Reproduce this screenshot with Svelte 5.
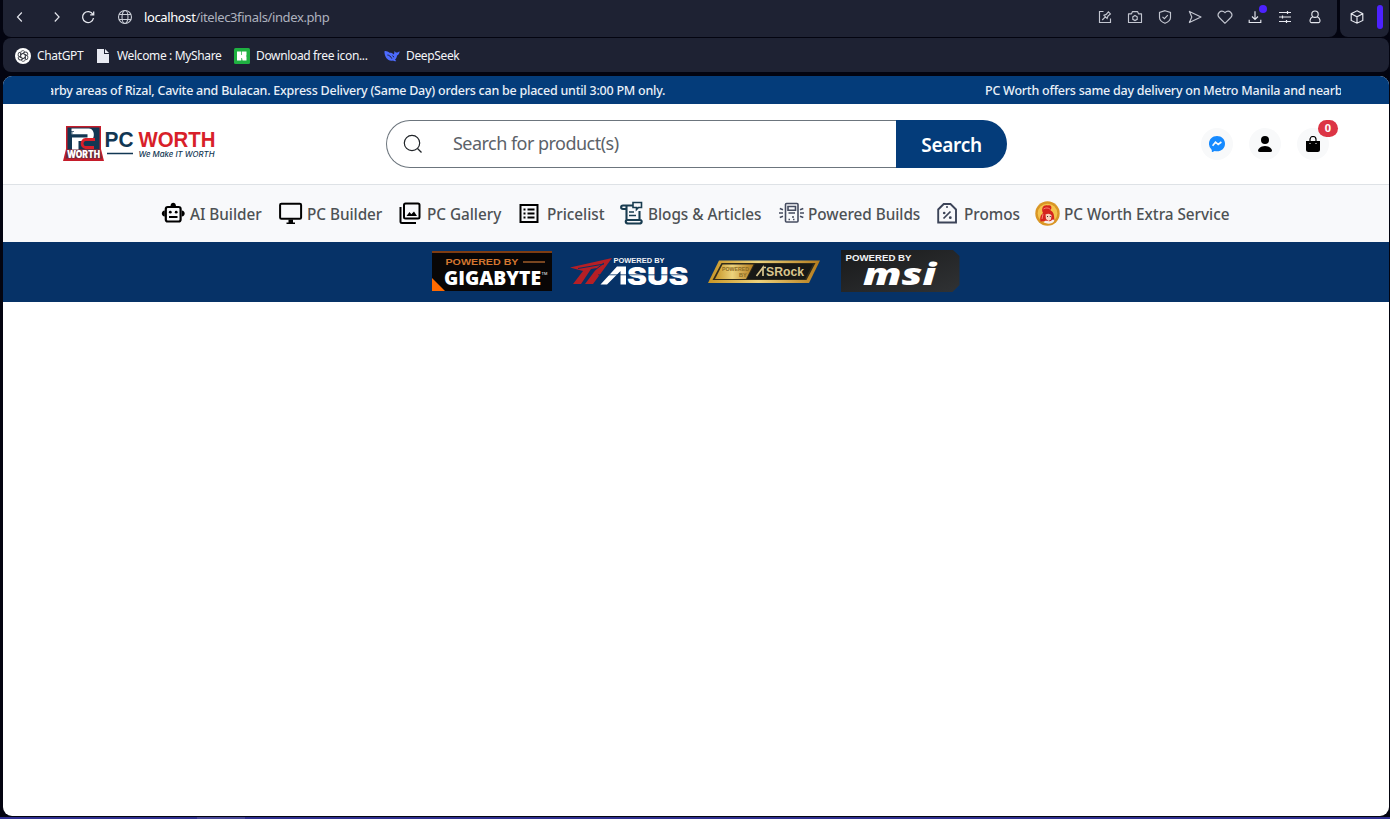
<script>
  const nav = [
    { id: 'ai', label: 'AI Builder', w: 72 },
    { id: 'pc', label: 'PC Builder', w: 75 },
    { id: 'gallery', label: 'PC Gallery', w: 75 },
    { id: 'price', label: 'Pricelist', w: 56 },
    { id: 'blog', label: 'Blogs & Articles', w: 115 },
    { id: 'power', label: 'Powered Builds', w: 111 },
    { id: 'promo', label: 'Promos', w: 55 },
    { id: 'extra', label: 'PC Worth Extra Service', w: 168 }
  ];
</script>

<div class="browser">
  <div class="toolbar">
    <div class="address">
      <svg class="i back" viewBox="0 0 16 16"><path d="M9.8 3.5 5.5 8l4.3 4.5" /></svg>
      <svg class="i fwd" viewBox="0 0 16 16"><path d="M5.8 3.5 10.1 8l-4.3 4.5" /></svg>
      <svg class="i reload" viewBox="0 0 16 16"><path d="M12.9 5.400A5.500 5.500 0 1 0 13.500 9M13.700 2.500v3.400h-3.500" stroke-width="1.300" /></svg>
      <svg class="i globe" viewBox="0 0 16 16"><circle cx="8" cy="8" r="6.500" /><ellipse cx="8" cy="8" rx="3" ry="6.500" /><path d="M2 5.500h12M2 10.500h12" /></svg>
      <p class="url"><b>localhost</b>/itelec3finals/index.php</p>
      <div class="tools">
        <svg class="i dim" viewBox="0 0 16 16"><path d="M6.500 2.500h-4v11h11V9.500M5.200 11l3.200-3.200M7 6.300l3.100 3.100.8-2.200 2.500-2.300-2-2-2.200 2.500z" /></svg>
        <svg class="i dim" viewBox="0 0 16 16"><path d="M1.500 4.800h3l1-2.200h5l1 2.200h3v8.700h-13z" stroke-linejoin="round" /><path d="M8 6.500l2.200 1.300v2.500L8 11.600l-2.200-1.300V7.800z" /></svg>
        <svg class="i dim" viewBox="0 0 16 16"><path d="M8 1.700 13.500 3.500v5c0 2.500-2.400 4.600-5.500 5.800-3.100-1.200-5.500-3.300-5.500-5.800v-5zM5.500 7.800l1.900 1.800 3.400-3.500" /></svg>
        <svg class="i dim" viewBox="0 0 16 16"><path d="M2.400 2.400 14 8 2.400 13.600 4.800 8z" stroke-linejoin="round" /></svg>
        <svg class="i dim" viewBox="0 0 16 16"><path d="M8 14.300 2.200 8.500C-1 5 4-.5 8 3.700c4-4.200 9 1.300 5.800 4.800z" /></svg>
        <span class="dl"><svg class="i" viewBox="0 0 16 16"><path d="M8 2.200v8.200M5 7.500l3 3 3-3M2.200 10.800v2.700h11.600v-2.700" /></svg><em></em></span>
        <svg class="i" viewBox="0 0 16 16"><path d="M2 3.500h12M2 8h12M2 12.500h12M10.500 2v3M5.500 6.500v3M9.500 11v3" stroke-width="1.200" /></svg>
        <svg class="i" viewBox="0 0 16 16"><circle cx="8" cy="5.200" r="3.200" /><path d="M5.600 8C2.400 9 2.500 13.600 4.200 13.600h7.600c1.700 0 1.800-4.600-1.400-5.600" /></svg>
      </div>
    </div>
    <div class="side">
      <svg class="i" viewBox="0 0 16 16"><path d="M8 1.800 13.800 4.700v6.700L8 14.200l-5.800-2.800V4.700zM2.200 4.700 8 7.800l5.800-3.100M8 7.800v6.400" /></svg>
      <span></span>
    </div>
  </div>

  <div class="bookmarks">
    <div class="bm b1">
      <svg viewBox="0 0 16 16"><circle cx="8" cy="8" r="8" fill="#fff" /><g fill="none" stroke="#3b3e46" stroke-width=".9">{#each [0, 60, 120, 180, 240, 300] as a}<path transform="rotate({a} 8 8)" d="M5.700 9.300V4.800c0-2.400 3.200-2.800 4.200-.9M5.700 6.700 9.400 4.500" />{/each}</g></svg>
      <span>ChatGPT</span>
    </div>
    <div class="bm b2">
      <svg viewBox="0 0 16 16"><path fill="#e8eaf2" d="M2 1h7v5h5v9H2z" /><path fill="#e8eaf2" d="M10 1l4 4h-4z" /></svg>
      <span>Welcome : MyShare</span>
    </div>
    <div class="bm b3">
      <svg viewBox="0 0 16 16"><rect width="16" height="16" rx="1.500" fill="#1fb141" /><path fill="#fff" d="M3 3.500h4.300v9H3zM8 3.500h4.500v4l-.7.5.7.500v4H8.500L8 10z" /><path fill="#fff" d="M7 7h2v3H7z" /></svg>
      <span>Download free icon...</span>
    </div>
    <div class="bm b4">
      <svg viewBox="0 0 16 16"><g transform="translate(0 -.8)"><path fill="#4d6bfe" d="M.4 4.200c1.300-.8 3.500.2 5.100 1.300 1.800-.2 3.100.4 4.300 1.800.7-.9.300-2.200.8-3.500.6.8.9 1.400 1.800 1.600 1.200-.1 2-.5 3.200-1.400-.1 2.200-1.100 3.800-2.600 4.400-.1 1.800-.8 3.100-2 4.100l1.300 1.200c-1.300.5-2.400.1-3.300-.4C3.800 14.600.5 9.400.4 4.200z" /><path d="M3.400 7.800c1.800.1 3.300 1.400 4.400 3.600M8.400 8.500l1.700 1.500" stroke="#1e2233" stroke-width="1" fill="none" /></g></svg>
      <span>DeepSeek</span>
    </div>
  </div>

  <main>
    <div class="ticker">
      <div class="window">
        <span class="t1">arby areas of Rizal, Cavite and Bulacan. Express Delivery (Same Day) orders can be placed until 3:00 PM only.</span>
        <span class="t2">PC Worth offers same day delivery on Metro Manila and nearby</span>
      </div>
    </div>

    <header>
      <svg class="logo" viewBox="0 0 154 38">
        <path d="M3 2h35v23l3 12H0l3-12z" fill="#c51c2a" />
        <path d="M4.500 3.500H36.500v22H4.500z" fill="#123753" />
        <path d="M4 25.500h33l2 9H2.500z" fill="#6b2a3a" />
        <path d="M8.500 4.500H26c6.500 0 6.500 12.500 0 12.500H15.500v8.500H9V13.500h15.500v-3.200H8.500z" fill="#fff" />
        <path d="M32 15.500h-9.500c-4.500 0-4.500 8 0 8H31" fill="none" stroke="#d81f2a" stroke-width="2.800" />
        <path d="M8 7.500h3M8 9h2" stroke="#123753" stroke-width=".7" />
        <text x="4" y="33.500" textLength="33" lengthAdjust="spacingAndGlyphs" class="badge-word">WORTH</text>
        <text x="41.500" y="22.700" textLength="29" lengthAdjust="spacingAndGlyphs" class="word" fill="#123753">PC</text>
        <text x="75.500" y="22.700" textLength="77" lengthAdjust="spacingAndGlyphs" class="word" fill="#d81f2a">WORTH</text>
        <path d="M44 29.500h26" stroke="#123753" stroke-width="1.500" />
        <text x="75.500" y="32.500" textLength="76" lengthAdjust="spacingAndGlyphs" class="tag">We Make IT WORTH</text>
      </svg>
      <div class="search">
        <div class="field">
          <svg viewBox="0 0 20 20"><circle cx="9" cy="9" r="7.700" /><path d="m14.500 14.500 4 4" /></svg>
          <span>Search for product(s)</span>
        </div>
        <button>Search</button>
      </div>
      <div class="actions">
        <div class="round"><svg viewBox="0 0 16 16"><path fill="#168aff" d="M8 0c4.600 0 8 3.300 8 7.700s-3.400 7.600-8 7.600c-.8 0-1.600-.1-2.300-.3L3.500 16c-.4.100-.7-.1-.7-.5v-1.600A7.500 7.500 0 0 1 0 7.700C0 3.300 3.400 0 8 0z" /><path d="m3.600 9.700 2.900-3.500 2.700 2.200 3.200-2.400" fill="none" stroke="#f7f9fb" stroke-width="1.600" /></svg></div>
        <div class="round"><svg viewBox="0 0 16 16"><circle cx="8" cy="4" r="4" /><path d="M2.500 16C1.500 16 1 15.500 1 14.800 1 13 3.500 10 8 10s7 3 7 4.800c0 .7-.5 1.200-1.500 1.200z" /></svg></div>
        <div class="round"><svg viewBox="0 0 16 16"><path d="M5 6V3.500a3 3 0 0 1 6 0V6" fill="none" stroke="#000" stroke-width="1.200" /><path d="M1 5h14v8.500A2.500 2.500 0 0 1 12.500 16h-9A2.500 2.500 0 0 1 1 13.500z" /><path d="M4.500 7.500h1M10.500 7.500h1" stroke="#fff" /></svg><i>0</i></div>
      </div>
    </header>

    <nav>
      {#each nav as n}
        <a href="#{n.id}">
          <svg viewBox="0 0 25 25">
            {#if n.id === 'ai'}
              <g fill="none" stroke="#000" stroke-width="2.200"><rect x="4.800" y="6" width="14.800" height="14.500" rx="2" /></g><path d="M9.500 5c0-4.500 5.500-4.500 5.500 0zM3.800 9.500v6C-.2 15.500-.2 9.500 3.800 9.500zM20.700 9.500v6c4 0 4-6 0-6z" /><circle cx="9.300" cy="11.200" r="1.400" /><circle cx="15.200" cy="11.200" r="1.400" /><path d="M8 15h8.500v2H8z" />
            {:else if n.id === 'pc'}
              <rect x="2.100" y="2.800" width="21" height="15" rx="1.300" fill="none" stroke="#000" stroke-width="2" /><path d="M10.500 18.500h4.500v3h2V23H8.500v-1.500h2z" />
            {:else if n.id === 'gallery'}
              <g fill="none" stroke="#000" stroke-width="2"><rect x="6" y="2.500" width="15.500" height="15" rx="1.500" /><path d="M2.500 6v14.500q0 1.500 1.500 1.500H18" /></g><path d="M8.500 15 11.500 11l1.800 2.200L16 10.500l3 4.500z" />
            {:else if n.id === 'price'}
              <path d="M2.500 4h17v17h-17z" fill="none" stroke="#000" stroke-width="2" /><path d="M5.500 8.500h2M9.500 8.500h7M5.500 12.500h2M9.500 12.500h7M5.500 16.500h2M9.500 16.500h7" stroke="#000" stroke-width="2" />
            {:else if n.id === 'blog'}
              <g fill="none" stroke="#183c50" stroke-width="2.100"><path d="M14 4.500H4C1.500 4.500 1.500 8 4 8h3.500v11M7.500 8V4.500M20.500 10v9M9.500 22.500h10.800c3 0 3-3.500 1-3.500H8.500c-2.500 0-2.500 3.500 1 3.500" /><path d="M14 1.500h8.500v5h-3l-2 2v-2H14zM10 11h5M10 14.500h7" stroke-width="1.600" /></g>
            {:else if n.id === 'power'}
              <g fill="none" stroke="#454c60" stroke-width="1.600"><rect x="6.500" y="2.500" width="12.500" height="18.500" rx="1" /><path d="M9 5.500h7.500v3.800H9zM.8 7.500l3.200 1.200M0 12h4M.8 16.500 4 15.300M24.300 7.500l-3.300 1.200M25 12h-4M24.300 16.500 21 15.300" /><path d="M9.500 12h6.500M9.500 18.500h1.500M14 18.500h1.500M13 16h2" stroke-width="1.700" /></g>
            {:else if n.id === 'promo'}
              <path d="M3.200 21.500V8.500L8.700 3h6.800L21 8.500v13z" fill="none" stroke="#3c4458" stroke-width="1.900" /><path d="m8.500 17.500 7-7M11 6h2" stroke="#3c4458" stroke-width="1.700" /><circle cx="9.200" cy="12" r="1.300" fill="#3c4458" /><circle cx="15.300" cy="16.700" r="1.400" fill="#3c4458" />
            {:else}
              <circle cx="12.500" cy="12.500" r="12.200" fill="#d99625" /><circle cx="12.500" cy="12.500" r="9.800" fill="#f4c34c" /><path d="M5.500 20.500c-1-4 .5-7 2.500-8.500C5.500 7 9 3 13 4.500c4-1 4 3 2.500 5C19.500 11 19 16 19.500 20z" fill="#d5251e" /><path d="M10.500 13.500c3-1.500 5-.5 6 1l-.5 4-2.500 1.500-2.500-2z" fill="#f8d3bd" /><path d="M9 21.500c1-3 4-1 5.500-1 2 0 3-3.500 5-1-1.500 3.500-7 4-10.500 2z" fill="#f6eff2" /><path d="M8.500 8c2-1.500 5-1.500 7 .5M8 13l-1 5" stroke="#fa8072" stroke-width="1" fill="none" /><path d="M12 15.500h1M14.800 15.500h1" stroke="#493033" />
            {/if}
          </svg>
          <span style="width:{n.w}px">{n.label}</span>
        </a>
      {/each}
    </nav>

    <div class="brands">
      <svg width="528" height="44" viewBox="0 0 528 44">
        <defs>
          <linearGradient id="gold"><stop offset="0" stop-color="#c79525" /><stop offset=".45" stop-color="#ecd27c" /><stop offset="1" stop-color="#b47b1c" /></linearGradient>
          <linearGradient id="steel" x2="1" y2="1"><stop offset="0" stop-color="#191a1b" /><stop offset="1" stop-color="#303234" /></linearGradient>
        </defs>
        <path d="M0 1h120v40H0z" fill="#080606" /><path d="M0 2h120" stroke="#a64f17" stroke-width="1.500" /><path d="M0 28 13 41H0z" fill="#ff6a00" />
        <text x="13.500" y="15.200" textLength="73" lengthAdjust="spacingAndGlyphs" class="pow orange">POWERED BY</text><path d="M91 12h22" stroke="#b9692f" stroke-width="1.300" />
        <text x="12" y="34.500" textLength="97" lengthAdjust="spacingAndGlyphs" class="giga">GIGABYTE</text><text x="109.500" y="24.500" class="tm">TM</text>

        <path d="M138 17.500 180 8l-19 26h-8l12-16-6 1-10 15h-8l10-13z" fill="#b51f25" /><path d="m146 18.500 26-4.500M163 20l9-7" stroke="#063267" stroke-width="1" />
        <text x="181.500" y="13.400" textLength="51" lengthAdjust="spacingAndGlyphs" class="pow asusp">POWERED BY</text>
        <path d="M168.500 34.500 185 16.500h9v18h-5.500V21L175 34.500z" fill="#fff" />
        <text x="195" y="34.500" textLength="61.500" lengthAdjust="spacingAndGlyphs" class="asus">SUS</text><path d="M166 24.800h91" stroke="#063267" stroke-width=".8" />

        <path d="M287 10.500h101L377 33H276z" fill="url(#gold)" /><path d="M289.500 13h94L374.500 30H280.500z" fill="#302b1b" /><path d="M290.500 14.500h31L314 29h-31z" fill="url(#gold)" /><path d="M323 14h58l-8 15h-58z" fill="#171816" />
        <text x="290" y="20.500" textLength="27" lengthAdjust="spacingAndGlyphs" class="tiny">POWERED</text><text x="307" y="27" class="tiny">BY</text>
        <path d="m324.500 26 6.500-8.500V26M334 17.500h-4" fill="none" stroke="#d9c68e" stroke-width="1.700" />
        <text x="334" y="26" textLength="38" lengthAdjust="spacingAndGlyphs" class="asrock">SRock</text>

        <path d="M409 0h112l6.500 6v29l-7 7H409z" fill="url(#steel)" />
        <text x="413.500" y="11" textLength="66" lengthAdjust="spacingAndGlyphs" class="pow white">POWERED BY</text>
        <text x="431" y="35.300" textLength="73" lengthAdjust="spacingAndGlyphs" class="msi">msi</text>
      </svg>
    </div>
  </main>
  <div class="edge"><span></span></div>
</div>

<style>
  :global(body) { margin: 0; overflow: hidden; background: #030410; }
  * { box-sizing: border-box; }
  svg { display: block; flex: none; }
  .browser { width: 1390px; height: 819px; padding-left: 3px; font-family: "Noto Sans", "Open Sans", sans-serif; display: flex; flex-direction: column; background: #030410; overflow: hidden; }
  .toolbar { height: 37px; display: flex; gap: 3px; padding-right: 1px; flex: none; }
  .address { width: 1334px; background: #1e2233; border-radius: 0 0 8px 8px; display: flex; align-items: center; padding: 0 14px 3px 9px; }
  .side { flex: 1; background: #1e2233; border-radius: 0 0 8px 8px; display: flex; align-items: center; padding: 0 6px 3px 9px; }
  .side span { width: 6px; height: 24px; background: #4d22ff; border-radius: 3px; margin-left: auto; }
  .i { width: 16px; height: 16px; fill: none; stroke: #e5e7ee; stroke-width: 1.150; }
  .dim { stroke: #c3c6d0; }
  .fwd { margin-left: 21px; }
  .reload { margin-left: 15px; }
  .globe { margin-left: 21px; stroke: #c9cdd6; stroke-width: 1.100; }
  .url { margin: 0 0 0 11px; font-size: 13px; line-height: 20px; letter-spacing: -.38px; color: #aeb2bf; white-space: nowrap; }
  .url b { color: #fff; font-weight: 400; }
  .tools { margin-left: auto; display: flex; gap: 14px; }
  .dl { position: relative; }
  .dl em { position: absolute; width: 8px; height: 8px; border-radius: 50%; background: #4d22ff; left: 12px; top: -4px; }
  .bookmarks { height: 34px; margin: 1px 1px 4px 0; flex: none; background: #1e2233; border-radius: 8px; display: flex; align-items: center; padding: 2px 0 0 12px; color: #f4f5f8; font-size: 12px; }
  .bm { display: flex; gap: 6px; align-items: center; white-space: nowrap; }
  .bm svg { width: 16px; height: 16px; }
  .bm span { line-height: 18px; letter-spacing: -.35px; }
  .b1 { width: 80px; }
  .b2 { width: 139px; }
  .b3 { width: 150px; }
  main { width: 1386px; height: 740px; flex: none; background: #fff; border-radius: 9px; overflow: hidden; }
  .ticker { height: 28px; background: #043c7a; padding: 0 48px; }
  .window { overflow: hidden; height: 28px; display: flex; width: 1290px; color: #e9f0f8; font-size: 12.500px; font-weight: 500; line-height: 29px; white-space: nowrap; letter-spacing: -.235px; }
  .window span { flex: none; }
  .t1 { width: 938px; margin-left: -4px; }
  header { height: 81px; border-bottom: 1px solid #dee2e6; display: flex; padding: 16px 60px 0; }
  .logo { width: 154px; height: 38px; margin: 4px 169px 0 0; overflow: visible; }
  .badge-word { font: 900 10px Inter, sans-serif; fill: #fff; }
  .word { font: 700 21.500px "Liberation Sans", sans-serif; }
  .tag { font: italic 500 7.800px Inter, sans-serif; fill: #123753; }
  .search { width: 621px; height: 48px; display: flex; }
  .field { width: 510px; border: 1px solid #6c757d; border-right: 0; border-radius: 24px 0 0 24px; display: flex; align-items: center; padding-left: 16px; font-size: 18px; color: #5c6269; letter-spacing: -.530px; }
  .field svg { width: 20px; height: 20px; margin-right: 30px; stroke: #212529; fill: none; stroke-width: 1.200; }
  .field span { margin-top: -2px; }
  button { width: 111px; border: 0; border-radius: 0 24px 24px 0; background: #043c7a; color: #fff; font: 600 19px "Noto Sans", sans-serif; letter-spacing: -.3px; padding: 2px 0 0; }
  .actions { margin-left: 194px; padding-top: 8px; display: flex; gap: 16px; }
  .round { width: 32px; height: 32px; border-radius: 50%; background: #f8f9fa; display: grid; place-items: center; position: relative; }
  .round svg { width: 16px; height: 16px; }
  .round i { position: absolute; left: 21px; top: -8px; width: 20px; height: 17px; border-radius: 9px; background: #dc3545; color: #fff; font: 700 11px/16px "Noto Sans", sans-serif; text-align: center; }
  nav { height: 57px; background: #f8f9fb; display: flex; gap: 16px; align-items: center; padding-left: 158px; }
  nav a { display: flex; align-items: center; gap: 4px; color: #4d5154; text-decoration: none; font-size: 15.300px; font-weight: 500; }
  nav svg { width: 25px; height: 25px; }
  nav span { white-space: nowrap; letter-spacing: -.030px; margin-top: 0; }
  .brands { height: 60px; background: #063267; padding: 8px 0 0 429px; }
  .pow { font: 700 9px "Liberation Sans", sans-serif; }
  .orange { fill: #d27630; }
  .white { fill: #f1f3f5; }
  .asusp { fill: #f1f3f5; font-size: 8px; }
  .asus { font: 900 24px Inter, sans-serif; fill: #fff; }
  .giga { font: 800 18.500px "Open Sans", sans-serif; fill: #fff; }
  .tm { font: 4px "Liberation Sans", sans-serif; fill: #fff; }
  .tiny { font: 700 5.500px "Liberation Sans", sans-serif; fill: #8b6b25; }
  .asrock { font: 700 12.500px "Liberation Sans", sans-serif; fill: #d9c68e; }
  .msi { font: italic 800 29.500px "Open Sans", sans-serif; fill: #fff; }
  .edge { height: 2px; margin: 1px 0 0 -3px; background: #2f3090; flex: none; }
  .edge span { display: block; width: 48px; height: 2px; margin-left: 197px; background: #4a4a9a; }
</style>
